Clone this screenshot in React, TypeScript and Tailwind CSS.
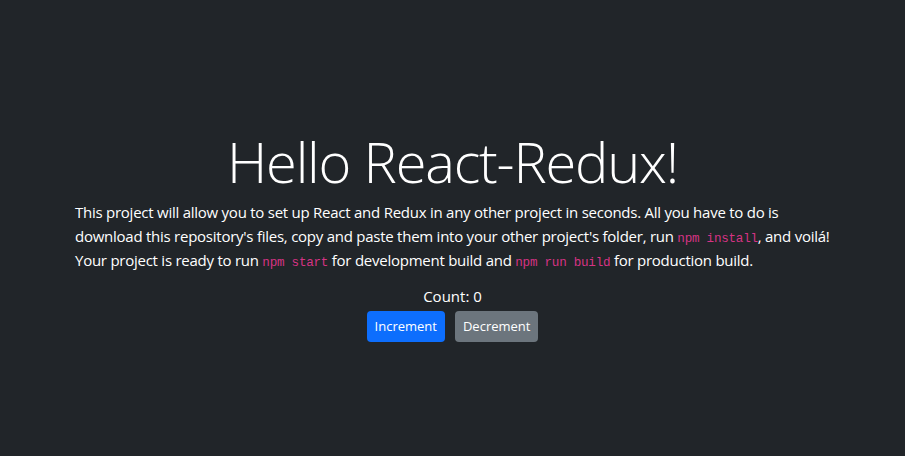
import React, { useState } from "react";

const codeCls = "font-['Liberation_Mono',monospace] text-[12.6px] leading-none text-[#d63384]";

export default function App() {
  const [count, setCount] = useState(0);
  return (
    <div className="min-h-screen w-full bg-[#212529] text-white font-['Open_Sans',sans-serif] flex flex-col">
      <div className="pt-[125px] px-[75px] flex flex-col">
        <h1 className="mb-[3px] text-center text-[56px] leading-[72px] font-light tracking-[-1.2px]">Hello React-Redux!</h1>
        <p className="text-[15px] leading-[24px] whitespace-nowrap tracking-[-0.25px]">
          This project will allow you to set up React and Redux in any other project in seconds. All you have to do is
          <br />
          download this repository's files, copy and paste them into your other project's folder, run{" "}
          <code className={codeCls}>npm install</code>, and voilá!
          <br />
          Your project is ready to run <code className={codeCls}>npm start</code> for development build and{" "}
          <code className={codeCls}>npm run build</code> for production build.
        </p>
        <div className="mt-[12px] text-center text-[15px] leading-[24px]">Count: {count}</div>
        <div className="mt-[3px] flex justify-center gap-[10px]">
          <button
            onClick={() => setCount(count + 1)}
            className="h-[31px] px-[8px] rounded-[4px] bg-[#0d6efd] text-[13px] text-white"
          >
            Increment
          </button>
          <button
            onClick={() => setCount(count - 1)}
            className="h-[31px] px-[8px] rounded-[4px] bg-[#6c757d] text-[13px] text-white"
          >
            Decrement
          </button>
        </div>
      </div>
    </div>
  );
}
